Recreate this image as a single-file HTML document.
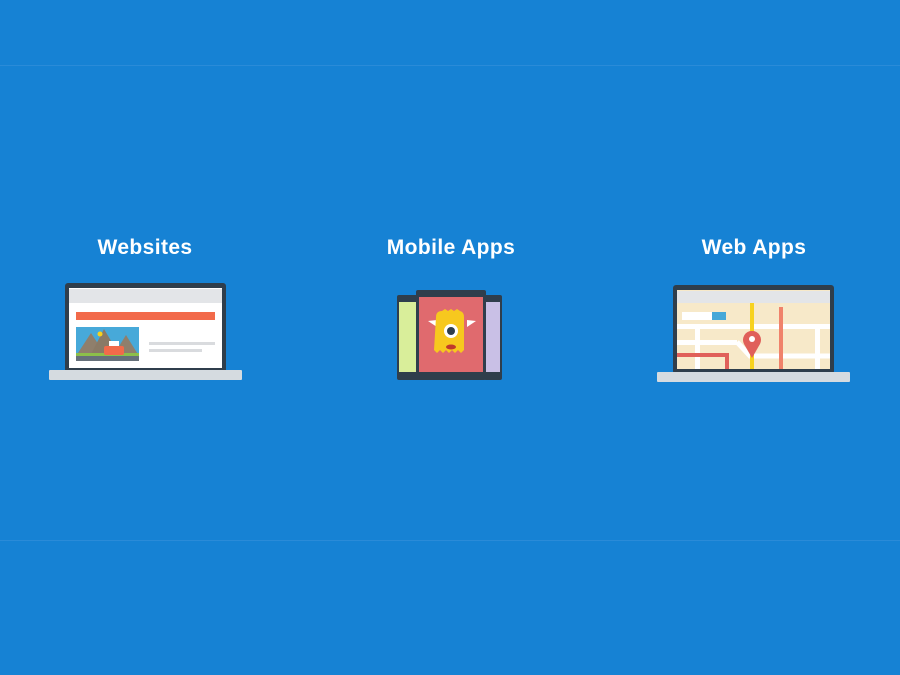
<!DOCTYPE html>
<html><head><style>
*{margin:0;padding:0}
body{width:900px;height:675px;background:#1682d4;position:relative;overflow:hidden;font-family:"Liberation Sans",sans-serif}
.a{position:absolute}
.t{position:absolute;color:#fff;font-weight:bold;font-size:21px;letter-spacing:0.4px;text-align:center;width:200px;top:236px}
</style></head><body>
<div class="a" style="left:0;top:65px;width:900px;height:1px;background:#2a8bd8"></div>
<div class="a" style="left:0;top:540px;width:900px;height:1px;background:#2a8bd8"></div>
<div class="t" style="left:45px">Websites</div>
<div class="t" style="left:351px">Mobile Apps</div>
<div class="t" style="left:654px">Web Apps</div>

<svg class="a" style="left:0;top:0" width="900" height="675">
<rect x="65" y="283" width="161" height="90" rx="3" fill="#2f3e4c"/>
<rect x="69" y="288" width="153" height="80" fill="#fff"/>
<rect x="69" y="289" width="153" height="14" fill="#e3e5e8"/>
<rect x="76" y="312" width="139" height="8" fill="#f26a4a"/>
<rect x="76" y="327" width="63" height="34" fill="#47a9d9"/>
<polygon points="76,356 91,333 106,356" fill="#8f7f6c"/>
<polygon points="90,356 104,329 120,356" fill="#8a7a66"/>
<polygon points="113,356 126,335 139,356" fill="#8f7f6c"/>
<circle cx="100" cy="334" r="2.5" fill="#f7d21e"/>
<rect x="76" y="353" width="63" height="3" fill="#8cbf4a"/>
<rect x="76" y="356" width="63" height="5" fill="#66707a"/>
<rect x="104" y="346" width="20" height="9" rx="2" fill="#f26a4a"/>
<rect x="109" y="341" width="10" height="5" fill="#fff"/>
<rect x="149" y="342" width="66" height="3" fill="#d9dbde"/>
<rect x="149" y="349" width="53" height="3" fill="#d9dbde"/>
<rect x="49" y="370" width="193" height="10" rx="1" fill="#d5dbe0"/>

<rect x="397" y="295" width="22" height="85" rx="2" fill="#2f3e4c"/>
<rect x="399" y="302" width="18" height="70" fill="#d9ee9a"/>
<rect x="484" y="295" width="18" height="85" rx="2" fill="#2f3e4c"/>
<rect x="486" y="302" width="14" height="70" fill="#c9c0e6"/>
<rect x="416" y="290" width="70" height="90" rx="2" fill="#2f3e4c"/>
<rect x="419" y="297" width="64" height="75" fill="#e06a6e"/>
<polygon points="437,320 428,321 437,327" fill="#fff"/>
<polygon points="467,320 476,321 467,327" fill="#fff"/>
<path d="M436,317 q0,-6 6,-6 l3,-2 3,2 3,-2 3,2 3,-2 3,2 q4,1 4,6 v33 l-3,3 -3,-3 -3,3 -3,-3 -3,3 -3,-3 -3,3 -3,-3 -3,3 -3,-3 z" fill="#f7c81e"/>
<circle cx="451" cy="331" r="7" fill="#fff"/>
<circle cx="451" cy="331" r="4" fill="#2f3e4c"/>
<ellipse cx="451" cy="347" rx="5" ry="2.5" fill="#c0392b"/>

<rect x="673" y="285" width="161" height="89" rx="3" fill="#2f3e4c"/>
<rect x="677" y="290" width="153" height="79" fill="#f7e9c9"/>
<rect x="677" y="291" width="153" height="12" fill="#e3e5e8"/>
<rect x="682" y="312" width="30" height="8" fill="#fff"/>
<rect x="712" y="312" width="14" height="8" fill="#46a8d8"/>
<rect x="677" y="324" width="153" height="5" fill="#fff"/>
<rect x="677" y="340" width="60" height="5" fill="#fff"/>
<polyline points="737,342 750,356 830,356" stroke="#fff" stroke-width="5" fill="none"/>
<rect x="695" y="324" width="5" height="45" fill="#fff"/>
<rect x="815" y="324" width="5" height="45" fill="#fff"/>
<rect x="750" y="303" width="4" height="66" fill="#f7d21e"/>
<rect x="779" y="307" width="4" height="62" fill="#f0826a"/>
<polyline points="677,355 727,355 727,369" stroke="#e0605a" stroke-width="4" fill="none"/>
<path d="M752,358 l-8,-14 a9,9 0 1 1 16,0 z" fill="#e0605a"/>
<circle cx="752" cy="339" r="3" fill="#fff"/>
<rect x="657" y="372" width="193" height="10" rx="1" fill="#d5dbe0"/>
</svg>
</body></html>
